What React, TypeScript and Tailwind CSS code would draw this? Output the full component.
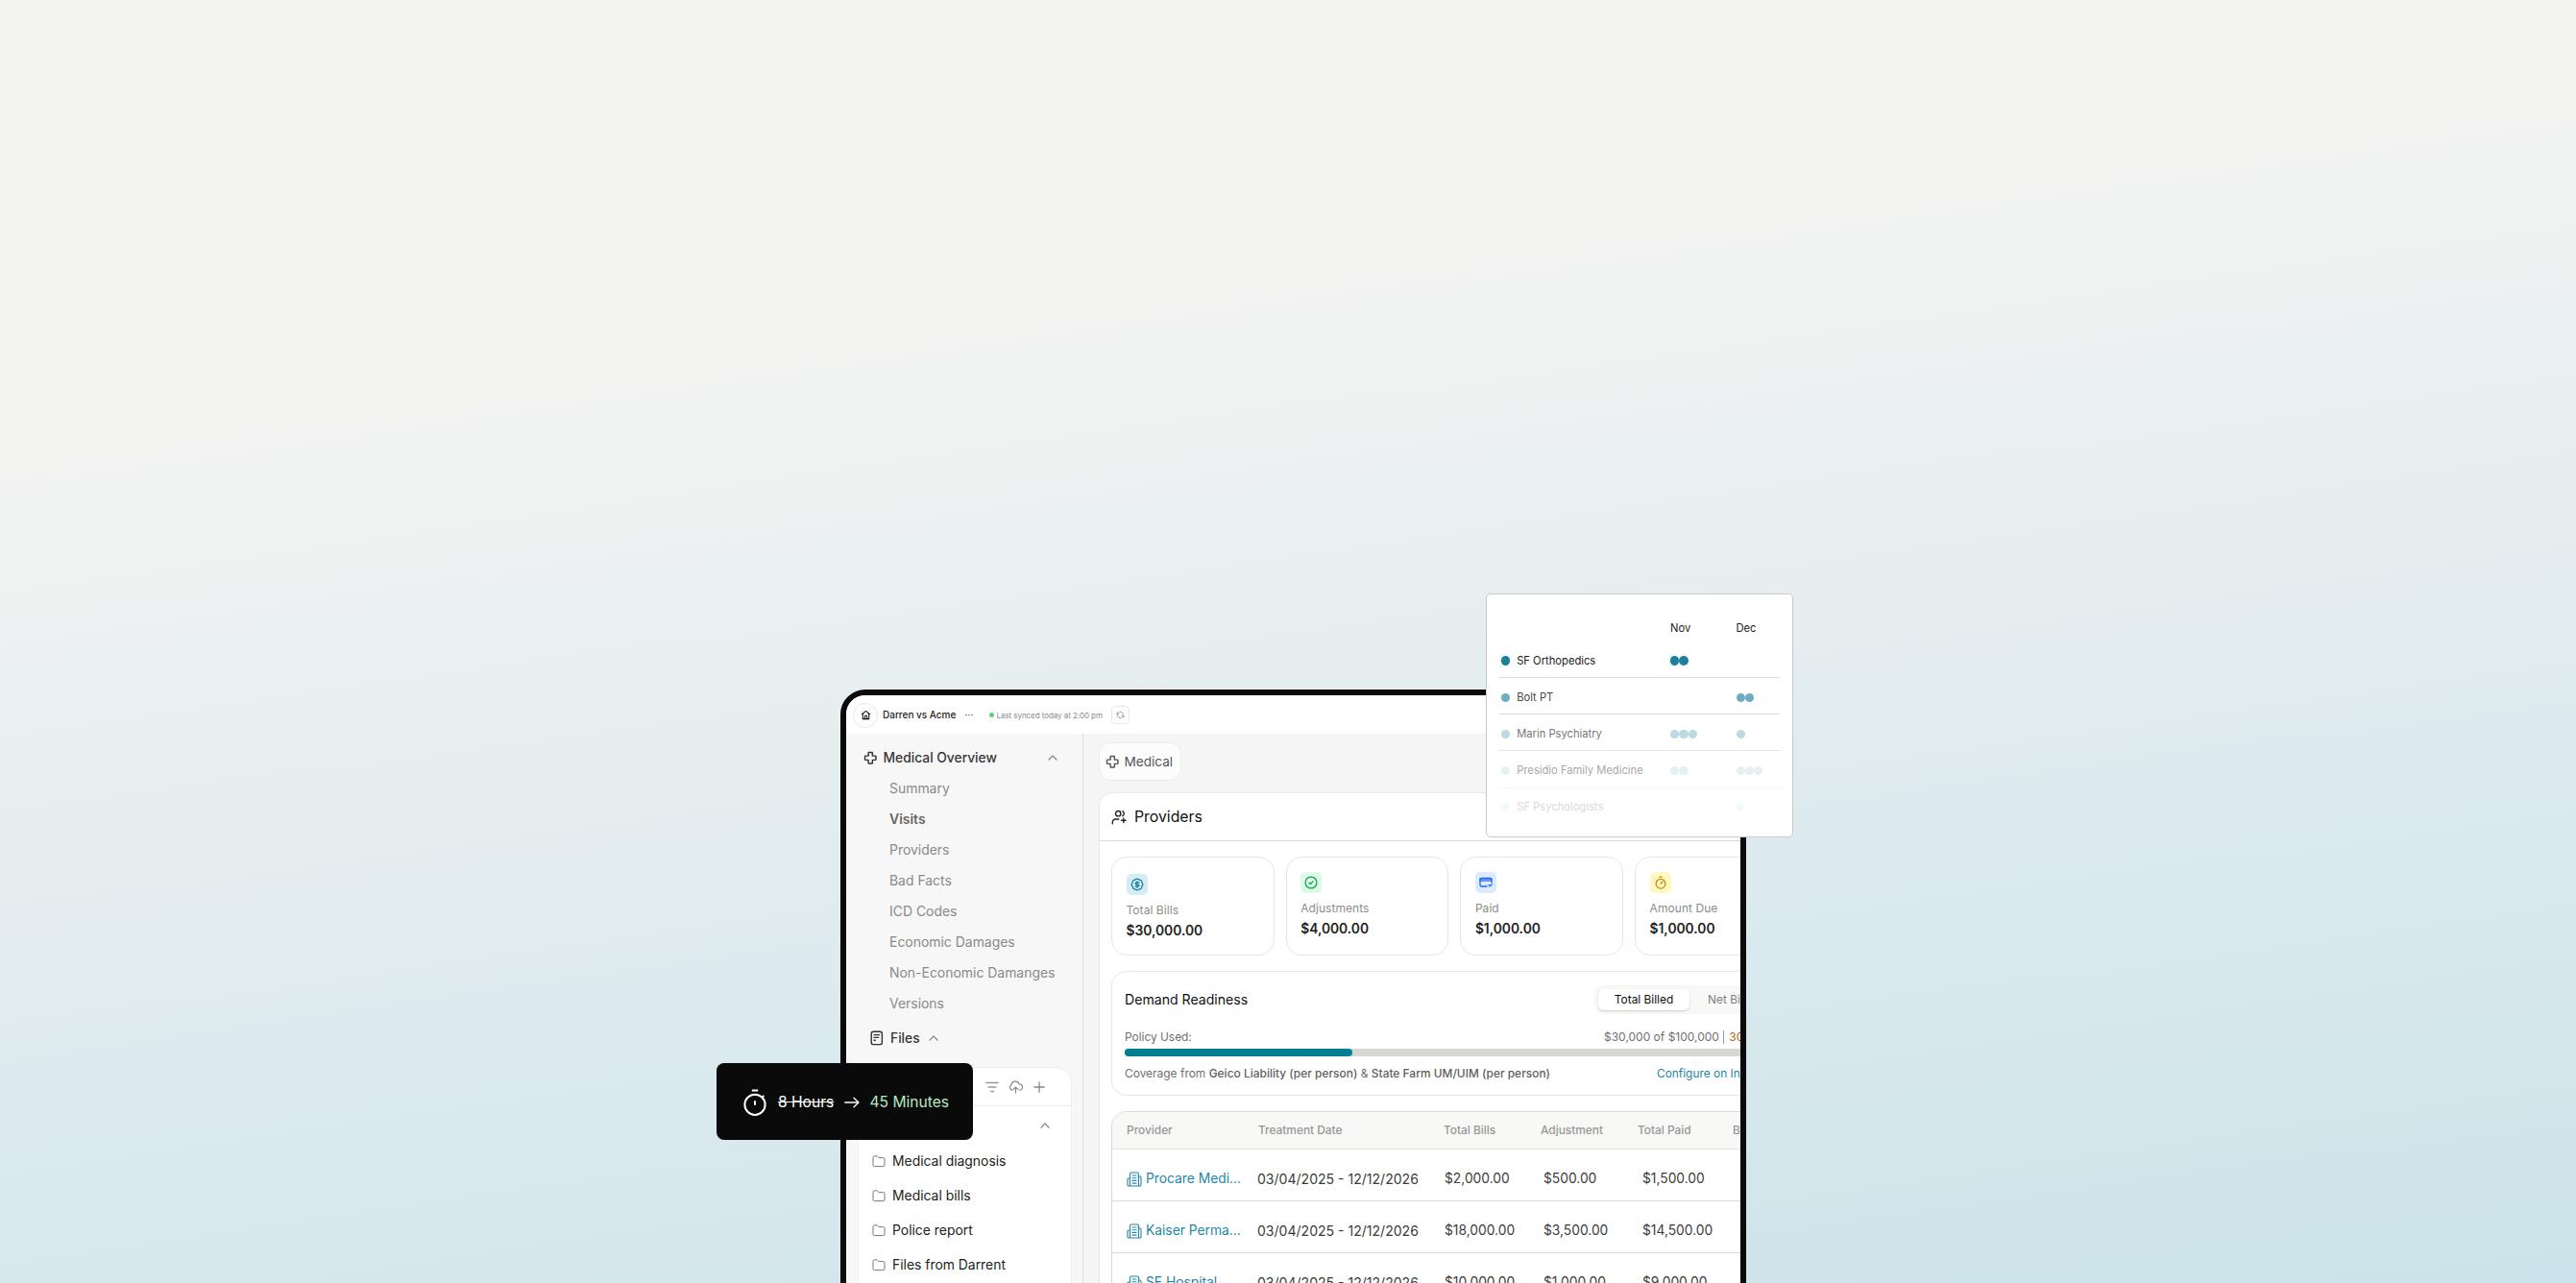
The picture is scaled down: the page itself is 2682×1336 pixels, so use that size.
import type { ReactNode } from 'react';

type IconProps = { className?: string };

function Icon({ className = '', sw = 2, vb = '0 0 24 24', children }: IconProps & { sw?: number; vb?: string; children: ReactNode }) {
  return (
    <svg viewBox={vb} fill="none" stroke="currentColor" strokeWidth={sw} strokeLinecap="round" strokeLinejoin="round" className={`shrink-0 ${className}`}>
      {children}
    </svg>
  );
}

const Cross = ({ className }: IconProps) => (
  <Icon className={className} sw={2.4}>
    <path d="M9.5 2.5h5a1 1 0 0 1 1 1v5h5a1 1 0 0 1 1 1v5a1 1 0 0 1-1 1h-5v5a1 1 0 0 1-1 1h-5a1 1 0 0 1-1-1v-5h-5a1 1 0 0 1-1-1v-5a1 1 0 0 1 1-1h5v-5a1 1 0 0 1 1-1Z" />
  </Icon>
);
const ChevronUp = ({ className }: IconProps) => (
  <Icon className={className} vb="0 0 10 6" sw={1.2}>
    <path d="M1 5l4-4 4 4" />
  </Icon>
);
const House = ({ className }: IconProps) => (
  <Icon className={className} sw={2.2}>
    <path d="M2.5 10.5 12 3l9.500 7.500" />
    <path d="M5 9v12h14V9" />
    <path d="M9.500 21v-5.500a2.500 2.500 0 0 1 5 0V21" />
  </Icon>
);
const Sync = ({ className }: IconProps) => (
  <Icon className={className} sw={2.200}>
    <path d="M3 5v4.500h4.500M21 19v-4.500h-4.500" />
    <path d="M9 3.500a9 9 0 0 1 11.500 7.500M15 20.500A9 9 0 0 1 3.500 13M20.500 14.500a9 9 0 0 1-2 3M3.500 9.500a9 9 0 0 1 2-3" />
  </Icon>
);
const FileText = ({ className }: IconProps) => (
  <Icon className={className} vb="0 0 14 16" sw={1.4}>
    <rect x="1.200" y="1.200" width="11.200" height="13.400" rx="2.200" />
    <path d="M4 4.600h5.600M4 7.400h4.600M4 10.200h1.400" />
  </Icon>
);
const Folder = ({ className }: IconProps) => (
  <Icon className={className} vb="0 0 14 14" sw={1}>
    <path d="M1 3.200A1.400 1.400 0 0 1 2.400 1.800h2.700l1.800 1.800h4.700A1.400 1.400 0 0 1 13 5v6.200a1.400 1.400 0 0 1-1.400 1.400H2.400A1.400 1.400 0 0 1 1 11.200Z" />
  </Icon>
);
const Users = ({ className }: IconProps) => (
  <Icon className={className} vb="0 0 16 16" sw={1.4}>
    <circle cx="7.200" cy="4.200" r="2.700" />
    <path d="M1.300 14.700v-1.500a3.200 3.200 0 0 1 3.200-3.200H7.800M11.800 1.700a2.900 2.900 0 0 1 0 5M12.800 9v4.600M10.500 11.300h4.600" />
  </Icon>
);
const Building = ({ className }: IconProps) => (
  <Icon className={className} vb="0 0 16 16" sw={1.1}>
    <path d="M3.500 15V2.500A1.500 1.500 0 0 1 5 1h6a1.500 1.500 0 0 1 1.500 1.500V15M3.500 7H2.300A1.300 1.300 0 0 0 1 8.300v5.400A1.300 1.300 0 0 0 2.300 15h11.400a1.300 1.300 0 0 0 1.300-1.300V6.300A1.300 1.300 0 0 0 13.700 5h-1.200" />
    <path d="M6 4h4M6 6.700h4M6 9.400h4M6 12.100h4" />
  </Icon>
);
const BadgeDollar = ({ className }: IconProps) => (
  <Icon className={className} sw={2.100}>
    <path d="M3.850 8.620a4 4 0 0 1 4.780-4.770 4 4 0 0 1 6.740 0 4 4 0 0 1 4.780 4.780 4 4 0 0 1 0 6.740 4 4 0 0 1-4.770 4.780 4 4 0 0 1-6.750 0 4 4 0 0 1-4.780-4.770 4 4 0 0 1 0-6.760Z" />
    <path d="M15.500 8.500h-5a1.750 1.750 0 1 0 0 3.500h3a1.750 1.750 0 1 1 0 3.500h-5M12 17.500v-11" />
  </Icon>
);
const CheckRing = ({ className }: IconProps) => (
  <Icon className={className} vb="0 0 14 14" sw={1.300}>
    <circle cx="7" cy="7" r="5.900" />
    <path d="m5 7.200 1.400 1.300L9 5.900" />
  </Icon>
);
const Card = ({ className }: IconProps) => (
  <Icon className={className} vb="0 0 14 14" sw={1.300}>
    <path d="M8 11H2.400A1.400 1.400 0 0 1 1 9.600V3.700a1.400 1.400 0 0 1 1.400-1.400h9.200A1.400 1.400 0 0 1 13 3.700V7" />
    <path d="M1.200 3.100h11.600v2.200H1.200z" fill="currentColor" fillOpacity=".55" strokeWidth=".7" />
    <path d="m10 9.800 1.100 1L13.200 9" />
  </Icon>
);
const Timer = ({ className }: IconProps) => (
  <Icon className={className} vb="0 0 14 14" sw={1.300}>
    <circle cx="7" cy="8.200" r="4.900" />
    <path d="M5.900 1.200h2.200M7 8.200l2-2" />
  </Icon>
);

const stats = [
  { label: 'Total Bills', amount: '$30,000.00', pad: 'pt-[17px]', tile: 'bg-[#d4edf5] text-[#16799b]', icon: BadgeDollar },
  { label: 'Adjustments', amount: '$4,000.00', pad: 'pt-[15px]', tile: 'bg-[#dcfce7] text-[#16a34a]', icon: CheckRing },
  { label: 'Paid', amount: '$1,000.00', pad: 'pt-[15px]', tile: 'bg-[#dbeafe] text-[#2563eb]', icon: Card },
  { label: 'Amount Due', amount: '$1,000.00', pad: 'pt-[15px]', tile: 'bg-[#fef9c3] text-[#ca8a04]', icon: Timer },
];

const rows = [
  { name: 'Procare Medi...', date: '03/04/2025 - 12/12/2026', cells: ['$2,000.00', '$500.00', '$1,500.00'] },
  { name: 'Kaiser Perma...', date: '03/04/2025 - 12/12/2026', cells: ['$18,000.00', '$3,500.00', '$14,500.00'] },
  { name: 'SF Hospital', date: '03/04/2025 - 12/12/2026', cells: ['$10,000.00', '$1,000.00', '$9,000.00'] },
];

const visits = [
  { name: 'SF Orthopedics', dot: 'bg-[#1b7f9e]', text: 'text-[#222]', line: 'border-[#dcdcdc]', nov: 2, dec: 0 },
  { name: 'Bolt PT', dot: 'bg-[#6dacc1]', text: 'text-[#484848]', line: 'border-[#d9d9d9]', nov: 0, dec: 2 },
  { name: 'Marin Psychiatry', dot: 'bg-[#bbd9e2]', text: 'text-[#787878]', line: 'border-[#e6e6e6]', nov: 3, dec: 1 },
  { name: 'Presidio Family Medicine', dot: 'bg-[#e4f0f3]', text: 'text-[#a8a8a8]', line: 'border-[#f3f3f3]', nov: 2, dec: 3 },
  { name: 'SF Psychologists', dot: 'bg-[#f3fafb]', text: 'text-[#dadada]', line: 'border-transparent', nov: 0, dec: 1 },
];

const sections = ['Summary', 'Visits', 'Providers', 'Bad Facts', 'ICD Codes', 'Economic Damages', 'Non-Economic Damanges', 'Versions'];
const folders = ['Medical diagnosis', 'Medical bills', 'Police report', 'Files from Darrent'];

function Dots({ n, color }: { n: number; color: string }) {
  return (
    <div className="flex shrink-0">
      {Array.from({ length: n }, (_, i) => (
        <span key={i} className={`size-[9.200px] shrink-0 rounded-full ${color}`} />
      ))}
    </div>
  );
}

function TopBar() {
  return (
    <header className="flex h-10 shrink-0 items-center bg-white pt-px pl-[7px]">
      <div className="flex size-[26px] items-center justify-center rounded-full border border-[#e8e8e8]">
        <House className="size-[11px] text-[#111]" />
      </div>
      <span className="ml-[5px] w-[86px] text-[10px] font-medium tracking-[-0.01px] text-[#222]">Darren vs Acme</span>
      <span className="flex w-[24.500px] gap-[1.500px]">
        <i className="size-[1.700px] rounded-full bg-[#777]" />
        <i className="size-[1.700px] rounded-full bg-[#777]" />
        <i className="size-[1.700px] rounded-full bg-[#777]" />
      </span>
      <span className="size-[5.500px] rounded-full bg-[#5fd083]" />
      <span className="ml-[2.500px] w-[119.500px] text-[8px] tracking-[-0.06px] text-[#8a8a8a]">Last synced today at 2:00 pm</span>
      <span className="flex size-[19px] items-center justify-center rounded-[5px] border border-[#e8e8e8]">
        <Sync className="size-[9px] text-[#888]" />
      </span>
    </header>
  );
}

function Sidebar() {
  return (
    <aside className="w-[247px] shrink-0 border-r border-[#dedede] bg-[#f7f7f7]">
      <div className="mt-[9px] flex h-8 items-center pl-[18px]">
        <Cross className="size-[14.500px] text-[#333]" />
        <span className="ml-1.5 w-[171px] text-[13.800px] font-medium text-[#383838]">Medical Overview</span>
        <ChevronUp className="h-[6px] w-[10px] text-[#888]" />
      </div>
      <ul className="pl-[45px] text-[13.950px] leading-8 text-[#8a8a8a]">
        {sections.map((s) => (
          <li key={s} className={s === 'Visits' ? 'font-semibold text-[#666]' : ''}>{s}</li>
        ))}
      </ul>
      <div className="mt-1 flex h-8 items-center pl-[25px]">
        <FileText className="h-[16px] w-[14px] text-[#333]" />
        <span className="ml-[7px] w-[40px] text-[13.800px] font-medium text-[#333]">Files</span>
        <ChevronUp className="h-[6px] w-[10px] text-[#888]" />
      </div>
      <div className="mt-[14px] ml-3 h-[240px] w-[223px] rounded-t-2xl border border-[#eee] bg-white">
        <div className="flex h-10 items-center justify-end gap-[10px] border-b border-[#ebebeb] pr-[27px] text-[#999]">
          <Icon className="h-[12px] w-[14px]" vb="0 0 14 12" sw={1.400}>
            <path d="M.8 1.500h12.400M3 6h8M5.500 10.500h3" />
          </Icon>
          <Icon className="h-[14px] w-[15px] text-[#888]" vb="0 0 15 14" sw={1.200}>
            <path d="M4 10.300A3.200 3.200 0 0 1 2.900 4.500a4.300 4.300 0 0 1 8.300-.5 3.100 3.100 0 0 1 .5 6.200M7.500 13V7.300M5.200 9.300l2.300-2.200 2.300 2.200" />
          </Icon>
          <Icon className="ml-[1px] size-[12px] text-[#888]" vb="0 0 12 12" sw={1.300}>
            <path d="M6 .8v10.400M.8 6h10.400" />
          </Icon>
        </div>
        <div className="flex h-[39px] items-center justify-end pr-[22px]">
          <ChevronUp className="h-[6px] w-[10px] text-[#888]" />
        </div>
        <ul className="pl-[14px] text-[13.900px] text-[#222]">
          {folders.map((f) => (
            <li key={f} className="flex h-9 items-center gap-[7px]">
              <Folder className="size-[14px] text-[#777]" />
              {f}
            </li>
          ))}
        </ul>
      </div>
    </aside>
  );
}

function StatCards() {
  return (
    <div className="mt-4 flex gap-3 pl-3">
      {stats.map(({ label, amount, pad, tile, icon: I }) => (
        <div key={label} className={`h-[103px] w-[169.700px] shrink-0 rounded-2xl border border-[#e6e6e6] pl-[14.500px] ${pad}`}>
          <div className={`flex size-[22px] items-center justify-center rounded-[5px] ${tile}`}>
            <I className="size-[14px]" />
          </div>
          <div className="mt-[6px] text-xs leading-5 tracking-[0.060px] text-[#8c8c8c]">{label}</div>
          <div className="text-[13.800px] leading-[22px] font-semibold text-[#222]">{amount}</div>
        </div>
      ))}
    </div>
  );
}

function Readiness() {
  return (
    <div className="mt-4 ml-3 h-[130px] w-[720px] rounded-2xl border border-[#e6e6e6] px-[13px]">
      <div className="mt-[14px] flex h-[30px] items-center">
        <span className="w-[489px] text-[14.100px] text-[#111]">Demand Readiness</span>
        <div className="flex h-[30px] w-[190px] items-center rounded-lg bg-[#f8f8f7] pl-1 text-[11.900px]">
          <span className="flex h-[22px] w-[95px] items-center justify-center rounded-[6px] bg-white text-[#111] shadow-[0_1px_2px_rgba(0,0,0,0.18)]">Total Billed</span>
          <span className="ml-[19px] text-[#80808a]">Net Billed</span>
        </div>
      </div>
      <div className="mt-[13px] flex h-[22px] items-center text-[11.900px] whitespace-nowrap text-[#707070]">
        <span className="w-[499px]">Policy Used:</span>
        <span className="text-xs">$30,000 of $100,000&nbsp;</span>
        <span className="ml-[1px] h-[14px] w-px bg-[#999]" />
        <span className="ml-[5px] text-xs text-[#b36b14]">30%</span>
      </div>
      <div className="mt-px h-2 rounded bg-[#d7d6d0]">
        <div className="h-2 w-[237px] rounded bg-[#017f91]" />
      </div>
      <div className="mt-[7px] flex h-[22px] items-center text-[11.900px] whitespace-nowrap text-[#707070]">
        <span className="w-[554px] tracking-[0.030px]">
          Coverage from <span className="font-medium text-[#606060]">Geico Liability (per person)</span> &amp; <span className="font-medium text-[#606060]">State Farm UM/UIM (per person)</span>
        </span>
        <span className="text-[#2386a5]">Configure on Insurance</span>
      </div>
    </div>
  );
}

function ProviderTable() {
  return (
    <div className="mt-4 ml-3 h-[240px] w-[720px] overflow-hidden rounded-t-2xl border border-[#dadad6]">
      <div className="flex h-[39px] items-center border-b border-[#e6e6e4] bg-[#f8f8f6] pl-[15px] text-[11.900px] font-medium text-[#979797]">
        <span className="w-[137px]">Provider</span>
        <span className="w-[193px]">Treatment Date</span>
        <span className="w-[101px]">Total Bills</span>
        <span className="w-[101px]">Adjustment</span>
        <span className="w-[99px]">Total Paid</span>
        <span>Balance</span>
      </div>
      {rows.map((r) => (
        <div key={r.name} className="flex h-[54px] items-center border-b border-[#d9d9d7] pt-[8px] pl-[15px] text-[13.800px] whitespace-nowrap text-[#3c3c3c]">
          <Building className="size-[16px] text-[#2386a5]" />
          <span className="ml-1 w-[116px] text-[#2386a5]">{r.name}</span>
          <span className="w-[195px] text-[14.050px]">{r.date}</span>
          <span className="w-[103px]">{r.cells[0]}</span>
          <span className="w-[103px]">{r.cells[1]}</span>
          <span>{r.cells[2]}</span>
        </div>
      ))}
    </div>
  );
}

function Main() {
  return (
    <main className="min-w-0 flex-1 bg-[#f5f5f5] pt-[9px] pl-4">
      <div className="flex h-10 w-[86px] items-center rounded-xl border border-[#ececec] bg-[#fcfcfc] pl-[6px] text-[#555]">
        <Cross className="size-[14.500px]" />
        <span className="ml-[5px] text-[13.600px]">Medical</span>
      </div>
      <section className="mt-3 h-[600px] w-[740px] rounded-t-[14px] border border-[#e8e8e8] bg-white">
        <div className="flex h-[50px] items-center border-b border-[#d9d9d9] pl-3">
          <Users className="size-[16px] text-[#222]" />
          <span className="ml-2 text-[15.800px] text-[#111]">Providers</span>
        </div>
        <StatCards />
        <Readiness />
        <ProviderTable />
      </section>
    </main>
  );
}

function VisitsPopover() {
  return (
    <div className="absolute top-[618px] left-[1547px] h-[254px] w-[320px] rounded-[5px] border border-[#c9c9c9] bg-white pt-[24px] pl-[13px] text-[11.200px]">
      <div className="flex h-[22px] items-center text-[#222]">
        <span className="w-[178px]" />
        <span className="w-[68.500px]">Nov</span>
        <span>Dec</span>
      </div>
      <div className="mt-[3px]">
        {visits.map((v) => (
          <div key={v.name} className={`flex h-[38.150px] w-[292px] items-center border-b pt-[3px] pl-[2px] ${v.line}`}>
            <Dots n={1} color={v.dot} />
            <span className={`ml-[7px] w-[160px] shrink-0 ${v.text}`}>{v.name}</span>
            <div className="w-[68.500px] shrink-0"><Dots n={v.nov} color={v.dot} /></div>
            <Dots n={v.dec} color={v.dot} />
          </div>
        ))}
      </div>
    </div>
  );
}

function TimeSaved() {
  return (
    <div className="absolute top-[1107px] left-[746px] flex h-20 w-[267px] items-center rounded-lg bg-[#0a0a0a] pt-px pl-7 text-[15.600px] text-white">
      <Icon className="h-[28px] w-[24px]" vb="0 0 24 28" sw={2}>
        <circle cx="12" cy="16.300" r="10.600" />
        <path d="M12 12.200v4.500M8.800 1.500h6.400M20 8.200l1.300-1.300" strokeLinecap="butt" />
      </Icon>
      <span className="ml-[12px] w-[69px] line-through">8 Hours</span>
      <Icon className="h-[12px] w-[16px]" vb="0 0 16 12" sw={1.300}>
        <path d="M.8 6h14.200M10 1.200 15 6l-5 4.800" />
      </Icon>
      <span className="ml-[10.500px] text-[#b4e8c2]">45 Minutes</span>
    </div>
  );
}

export default function App() {
  return (
    <div className="relative h-[1336px] w-[2682px] overflow-hidden bg-[linear-gradient(172deg,#f4f4f2_0%,#f4f4f2_25%,#cbe3ea_100%)] pt-[718px] pl-[875px] font-['Inter',sans-serif]">
      <div className="flex h-[640px] w-[943px] flex-col overflow-hidden rounded-t-[26px] border-[6px] border-[#0a0a0a] bg-white">
        <TopBar />
        <div className="flex flex-1">
          <Sidebar />
          <Main />
        </div>
      </div>
      <VisitsPopover />
      <TimeSaved />
    </div>
  );
}
